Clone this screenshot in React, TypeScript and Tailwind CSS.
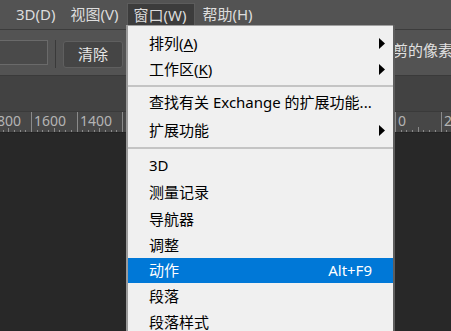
import React from "react";

type Item =
  | { kind: "sep"; h: number }
  | {
      kind: "item";
      label: React.ReactNode;
      h: number;
      arrow?: boolean;
      shortcut?: string;
      active?: boolean;
    };

const items: Item[] = [
  { kind: "item", h: 26, arrow: true, label: <>排列(<span className="underline underline-offset-2">A</span>)</> },
  { kind: "item", h: 27, arrow: true, label: <>工作区(<span className="underline underline-offset-2">K</span>)</> },
  { kind: "sep", h: 6 },
  { kind: "item", h: 27, label: "查找有关 Exchange 的扩展功能..." },
  { kind: "item", h: 28, arrow: true, label: "扩展功能" },
  { kind: "sep", h: 8 },
  { kind: "item", h: 27, label: "3D" },
  { kind: "item", h: 27, label: "测量记录" },
  { kind: "item", h: 27, label: "导航器" },
  { kind: "item", h: 25, label: "调整" },
  { kind: "item", h: 25, label: "动作", shortcut: "Alt+F9", active: true },
  { kind: "item", h: 26, label: "段落" },
  { kind: "item", h: 26, label: "段落样式" },
];

const font = { fontFamily: '"Noto Sans", "Noto Sans CJK SC", sans-serif' };

function Arrow() {
  return (
    <svg width="6" height="11" viewBox="0 0 6 11" className="block">
      <path d="M0 0 L6 5.5 L0 11 Z" fill="#000" />
    </svg>
  );
}

function Ruler() {
  const major: { x: number; label: string }[] = [];
  const labels = [1800, 1600, 1400, 1200, 1000, 800, 600, 400, 200, 0, 200];
  for (let k = 0; k < labels.length; k++) {
    major.push({ x: -14.5 + 45.5 * k, label: String(labels[k]) });
  }
  const minor: number[] = [];
  for (let k = 0; k < 11; k++) {
    for (let j = 1; j < 8; j++) minor.push(-14.5 + 45.5 * k + (45.5 / 8) * j);
  }
  const visible = major.filter((m) => m.x < 118 || m.x > 390);
  return (
    <div className="relative h-[21px] bg-[#474747] border-t border-[#3a3a3a] overflow-hidden">
      <svg width="451" height="21" className="absolute left-0 top-0">
        {major.map((m, i) => (
          <line key={i} x1={Math.round(m.x) + 0.5} x2={Math.round(m.x) + 0.5} y1={0} y2={21} stroke="#8a8a8a" strokeWidth={1} />
        ))}
        {minor.map((x, i) => (
          <line
            key={"m" + i}
            x1={Math.round(x) + 0.5}
            x2={Math.round(x) + 0.5}
            y1={i % 7 === 3 ? 15 : 18}
            y2={21}
            stroke="#8a8a8a"
            strokeWidth={1}
          />
        ))}
      </svg>
      {visible.map((m, i) => (
        <span
          key={"l" + i}
          className="absolute top-[2px] text-[14px] leading-none text-[#b4b4b4] bg-[#474747] pr-[1px]"
          style={{ left: Math.round(m.x) + 3, ...font }}
        >
          {m.label}
        </span>
      ))}
    </div>
  );
}

export default function App() {
  return (
    <div className="relative w-[451px] h-[331px] overflow-hidden bg-[#282828] flex flex-col" style={font}>
      {/* menu bar */}
      <div className="h-[30px] bg-[#535353] border-b border-[#3c3c3c] flex items-start pt-[3px] pl-[9px] text-[15px] text-[#dddddd] shrink-0">
        <div className="h-[22px] px-[7px] flex items-center leading-none">3D(D)</div>
        <div className="h-[22px] px-[8px] flex items-center leading-none">视图(V)</div>
        <div className="h-[23px] pl-[6px] pr-[8px] flex items-center leading-none bg-[#3c3c3c] border border-b-0 border-[#5c5c5c]">
          窗口(W)
        </div>
        <div className="h-[22px] px-[7px] flex items-center leading-none">帮助(H)</div>
      </div>

      {/* options bar */}
      <div className="h-[45px] bg-[#535353] flex items-start pt-[10px] shrink-0 relative overflow-hidden">
        <div className="ml-[-10px] w-[58px] h-[25px] border border-[#6a6a6a] bg-[#4a4a4a] shrink-0" />
        <div className="ml-[7px] w-[1px] h-[28px] bg-[#3a3a3a] shrink-0" />
        <div className="ml-[7px] mt-[1px] w-[60px] h-[27px] shrink-0 rounded-[3px] border border-[#5f5f5f] bg-[#454545] flex items-center justify-center text-[15px] text-[#e6e6e6] leading-none">
          清除
        </div>
        <div className="ml-auto mr-[-2px] mt-[3px] text-[15px] leading-none text-[#e0e0e0] whitespace-nowrap shrink-0">
          删除裁剪的像素
        </div>
      </div>

      {/* tab strip */}
      <div className="h-[36px] bg-[#424242] border-t border-[#3a3a3a] shrink-0" />

      <Ruler />

      <div className="flex-1 bg-[#282828] border-t border-[#222]" />

      {/* dropdown menu */}
      <div className="absolute left-[126px] top-[25px] w-[269px] h-[320px] flex">
        <div className="w-[267px] bg-[#f0f0f0] border-t border-[#a0a0a0] border-l-[2px] border-l-[#9a9a9a] pt-[4px] flex flex-col text-[15px] text-black">
          {items.map((it, i) =>
            it.kind === "sep" ? (
              <div key={i} className="flex items-center" style={{ height: it.h }}>
                <div className="w-full h-[2px] bg-[#c4c4c4]" />
              </div>
            ) : (
              <div
                key={i}
                className={
                  "flex items-center pl-[21px] pr-[8px] leading-none whitespace-nowrap " +
                  (it.active ? "bg-[#0078d7] text-white" : "")
                }
                style={{ height: it.h }}
              >
                <span className="flex-1">{it.label}</span>
                {it.shortcut && <span className="mr-[13px]">{it.shortcut}</span>}
                {it.arrow && <Arrow />}
              </div>
            )
          )}
        </div>
        <div className="w-[2px] bg-[#5e5e5e]" />
      </div>
    </div>
  );
}
